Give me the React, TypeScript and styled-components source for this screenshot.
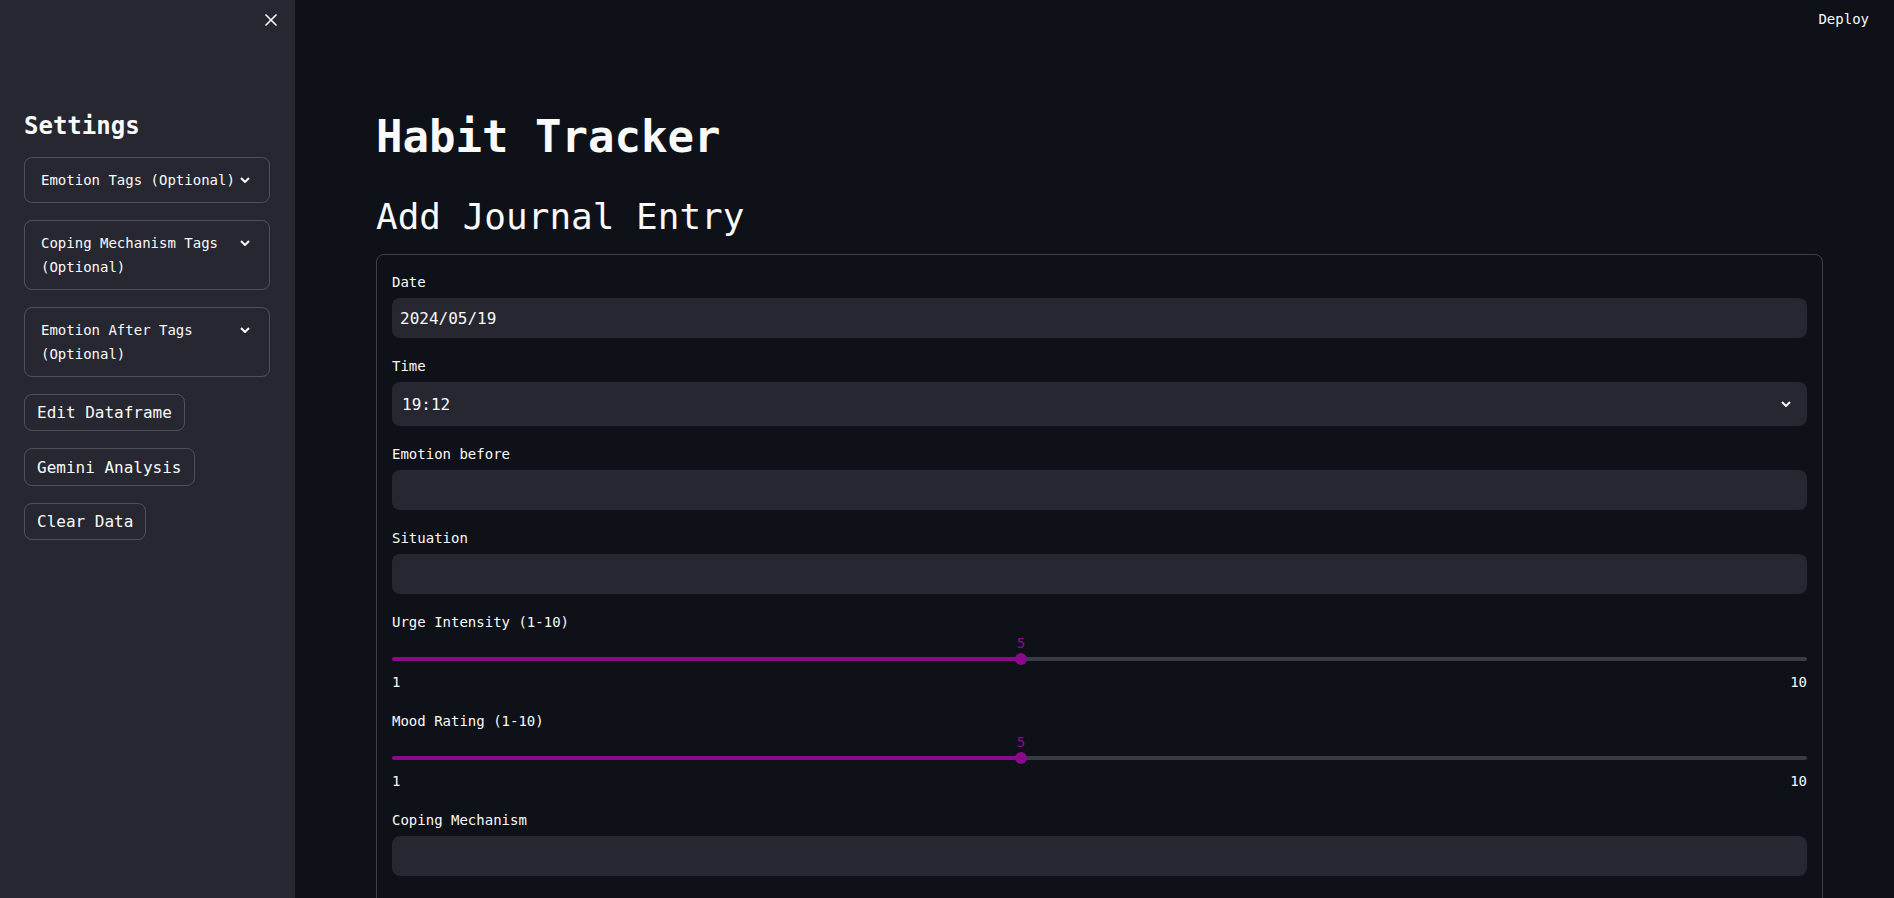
import styled, { createGlobalStyle } from 'styled-components';
import { X } from 'lucide-react';

const GlobalStyle = createGlobalStyle`
    html, body {
        margin: 0;
        padding: 0;
        background: #0e1117;
        color: #fafafa;
        font-family: "DejaVu Sans Mono", "Liberation Mono", monospace;
    }
    * {
        box-sizing: border-box;
    }
`;

const ACCENT = '#8b0a8b';
const BORDER = 'rgba(250, 250, 250, 0.2)';

const Shell = styled.div`
    display: flex;
    height: 100vh;
    overflow: hidden;
`;

const Sidebar = styled.aside`
    width: 295px;
    flex: 0 0 295px;
    background: #262730;
    display: flex;
    flex-direction: column;
    padding: 0 25px 0 24px;
`;

const CloseRow = styled.div`
    height: 40px;
    flex-shrink: 0;
    display: flex;
    align-items: center;
    justify-content: flex-end;
    margin-right: -11px;
    color: #fafafa;
`;

const CloseButton = styled.button`
    background: none;
    border: none;
    padding: 0;
    color: inherit;
    display: flex;
    cursor: pointer;
`;

const SideTitle = styled.h2`
    margin: 72px 0 16px;
    font-size: 24px;
    line-height: 28.8px;
    font-weight: 700;
`;

const SideStack = styled.div`
    display: flex;
    flex-direction: column;
    align-items: flex-start;
    gap: 17px;
`;

const Expander = styled.div`
    align-self: stretch;
    display: flex;
    align-items: flex-start;
    border: 1px solid ${BORDER};
    border-radius: 8px;
    padding: 10px 16px;
    font-size: 14px;
    line-height: 24px;
    cursor: pointer;
`;

const ExpanderTitle = styled.span`
    flex: 1;
`;

const IconSlot = styled.span`
    width: 16px;
    height: 24px;
    flex: 0 0 16px;
    display: flex;
    align-items: center;
    justify-content: center;
`;

const SideButton = styled.button`
    height: 37.5px;
    padding: 0 12px;
    border: 1px solid ${BORDER};
    border-radius: 8px;
    background: transparent;
    color: #fafafa;
    font-family: inherit;
    font-size: 16px;
    cursor: pointer;
`;

const Main = styled.main`
    flex: 1;
    display: flex;
    flex-direction: column;
    overflow: hidden;
`;

const TopBar = styled.header`
    height: 38px;
    flex-shrink: 0;
    display: flex;
    align-items: center;
    justify-content: flex-end;
    padding-right: 25px;
`;

const DeployButton = styled.button`
    background: none;
    border: none;
    padding: 0;
    color: #fafafa;
    font-family: inherit;
    font-size: 14px;
    cursor: pointer;
`;

const Content = styled.div`
    flex-shrink: 0;
    padding: 0 71px 0 81px;
`;

const PageTitle = styled.h1`
    margin: 73px 0 0;
    font-size: 44px;
    line-height: 52.8px;
    font-weight: 700;
`;

const SectionTitle = styled.h2`
    margin: 31px 0 16px;
    font-size: 36px;
    line-height: 43.2px;
    font-weight: 400;
`;

const FormBox = styled.form`
    border: 1px solid ${BORDER};
    border-radius: 8px;
    padding: 15px;
    display: flex;
    flex-direction: column;
    gap: 16px;
`;

const Field = styled.div`
    display: flex;
    flex-direction: column;
`;

const Label = styled.label`
    font-size: 14px;
    line-height: 24px;
    margin-bottom: 4px;
`;

const TextInput = styled.input`
    height: 40px;
    width: 100%;
    border: none;
    outline: none;
    border-radius: 8px;
    background: #262730;
    color: #fafafa;
    font-family: inherit;
    font-size: 16px;
    padding: 0 8px;
`;

const SelectBox = styled.div`
    height: 44px;
    border-radius: 8px;
    background: #262730;
    display: flex;
    align-items: center;
    justify-content: space-between;
    padding: 0 16px 0 10px;
    font-size: 16px;
    cursor: pointer;
`;

const SliderBox = styled.div`
    height: 55px;
    display: flex;
    flex-direction: column;
`;

const ValueRow = styled.div`
    position: relative;
    height: 14px;
`;

const ValueText = styled.span`
    position: absolute;
    top: -2px;
    transform: translateX(-50%);
    font-size: 14px;
    line-height: 14px;
    color: ${ACCENT};
`;

const TrackRow = styled.div`
    position: relative;
    height: 14px;
    display: flex;
    align-items: center;
`;

const Track = styled.div<{ $pct: number }>`
    width: 100%;
    height: 4px;
    border-radius: 2px;
    background: linear-gradient(
        to right,
        ${ACCENT} ${(p) => p.$pct}%,
        #3a3c45 ${(p) => p.$pct}%
    );
`;

const Thumb = styled.span`
    position: absolute;
    top: 1px;
    width: 12px;
    height: 12px;
    border-radius: 50%;
    background: ${ACCENT};
    transform: translateX(-50%);
`;

const TickRow = styled.div`
    margin-top: 5px;
    display: flex;
    justify-content: space-between;
    font-size: 14px;
    line-height: 22px;
`;

function Chevron() {
    return (
        <svg width="10" height="6" viewBox="0 0 10 6" fill="none">
            <path d="M1 1l4 4 4-4" stroke="currentColor" strokeWidth="2" />
        </svg>
    );
}

function Slider({ label, value, min, max }: { label: string; value: number; min: number; max: number }) {
    const pct = ((value - min) / (max - min)) * 100;
    return (
        <Field>
            <Label>{label}</Label>
            <SliderBox>
                <ValueRow>
                    <ValueText style={{ left: `${pct}%` }}>{value}</ValueText>
                </ValueRow>
                <TrackRow>
                    <Track $pct={pct} />
                    <Thumb style={{ left: `${pct}%` }} />
                </TrackRow>
                <TickRow>
                    <span>{min}</span>
                    <span>{max}</span>
                </TickRow>
            </SliderBox>
        </Field>
    );
}

const expanders = ['Emotion Tags (Optional)', 'Coping Mechanism Tags (Optional)', 'Emotion After Tags (Optional)'];
const actions = ['Edit Dataframe', 'Gemini Analysis', 'Clear Data'];

export default function App() {
    return (
        <>
            <GlobalStyle />
            <Shell>
                <Sidebar>
                    <CloseRow>
                        <CloseButton aria-label="Close sidebar">
                            <X size={20} strokeWidth={2} />
                        </CloseButton>
                    </CloseRow>
                    <SideTitle>Settings</SideTitle>
                    <SideStack>
                        {expanders.map((title) => (
                            <Expander key={title}>
                                <ExpanderTitle>{title}</ExpanderTitle>
                                <IconSlot>
                                    <Chevron />
                                </IconSlot>
                            </Expander>
                        ))}
                        {actions.map((a) => (
                            <SideButton key={a}>{a}</SideButton>
                        ))}
                    </SideStack>
                </Sidebar>
                <Main>
                    <TopBar>
                        <DeployButton>Deploy</DeployButton>
                    </TopBar>
                    <Content>
                        <PageTitle>Habit Tracker</PageTitle>
                        <SectionTitle>Add Journal Entry</SectionTitle>
                        <FormBox onSubmit={(e) => e.preventDefault()}>
                            <Field>
                                <Label>Date</Label>
                                <TextInput defaultValue="2024/05/19" />
                            </Field>
                            <Field>
                                <Label>Time</Label>
                                <SelectBox>
                                    <span>19:12</span>
                                    <Chevron />
                                </SelectBox>
                            </Field>
                            <Field>
                                <Label>Emotion before</Label>
                                <TextInput />
                            </Field>
                            <Field>
                                <Label>Situation</Label>
                                <TextInput />
                            </Field>
                            <Slider label="Urge Intensity (1-10)" value={5} min={1} max={10} />
                            <Slider label="Mood Rating (1-10)" value={5} min={1} max={10} />
                            <Field>
                                <Label>Coping Mechanism</Label>
                                <TextInput />
                            </Field>
                            <Field>
                                <Label>Emotion after</Label>
                                <TextInput />
                            </Field>
                        </FormBox>
                    </Content>
                </Main>
            </Shell>
        </>
    );
}
